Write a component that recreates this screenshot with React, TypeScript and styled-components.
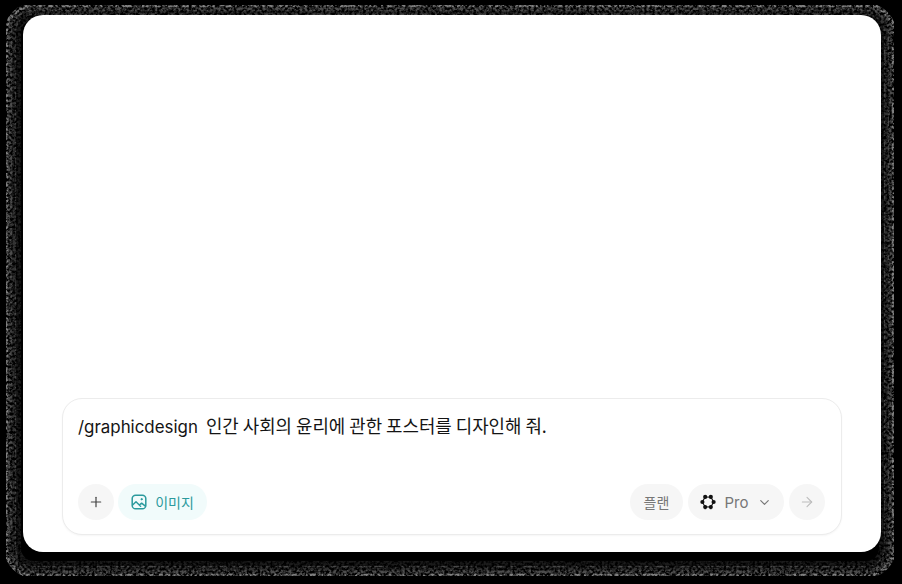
import React from 'react';
import styled, { createGlobalStyle } from 'styled-components';
import { ArrowRight, ChevronDown, Plus } from 'lucide-react';

const GlobalStyle = createGlobalStyle`
  html, body {
    margin: 0;
    padding: 0;
    background: #000;
    font-family: Inter, "Noto Sans CJK KR", sans-serif;
  }
`;

// grain bands, from the outer edge in to the card
const bands = [
  { inset: 6, width: 4, opacity: 0.5 },
  { inset: 10, width: 4, opacity: 0.3 },
  { inset: 14, width: 4, opacity: 0.2 },
  { inset: 18, width: 6, opacity: 0.11 },
];

const NoiseRing = () => (
  <RingSvg width="902" height="584" viewBox="0 0 902 584">
    <defs>
      <filter id="grain" x="0" y="0" width="100%" height="100%" filterUnits="objectBoundingBox">
        <feTurbulence type="fractalNoise" baseFrequency="0.38" numOctaves="2" seed="11" />
        <feColorMatrix
          type="matrix"
          values="0 0 0 0 1  0 0 0 0 1  0 0 0 0 1  3 0 0 0 -1"
        />
        <feComposite in2="SourceGraphic" operator="in" />
        <feGaussianBlur stdDeviation="0.5" />
      </filter>
    </defs>
    <g filter="url(#grain)" fill="none" stroke="#fff">
      {bands.map(b => (
        <rect
          key={b.inset}
          x={4 + b.inset - 4}
          y={4 + b.inset - 4 - 1}
          width={893 - 2 * (b.inset - 4) - 1}
          height={574 - 2 * (b.inset - 4) + 1}
          rx={Math.max(34 - b.inset, 14)}
          strokeWidth={b.width}
          strokeOpacity={b.opacity}
        />
      ))}
    </g>
  </RingSvg>
);

const ImageIcon = () => (
  <svg width="16" height="16" viewBox="0 0 16 16" fill="none" stroke="#2b9a9d" strokeWidth="1.5" strokeLinecap="round" strokeLinejoin="round">
    <rect x="1.2" y="1.2" width="13.6" height="13.6" rx="3.4" />
    <path d="M1.6 11 L5 7.8 L9.6 12.2 M8.4 11 L10.6 9.2 L14.4 12.2" />
    <circle cx="10.6" cy="5.2" r="0.7" fill="#2b9a9d" strokeWidth="0.8" />
  </svg>
);

const FlowerIcon = () => (
  <svg width="16" height="16" viewBox="0 0 16 16" fill="#111">
    <circle cx="8" cy="8" r="5" fill="none" stroke="#111" strokeWidth="1.1" />
    <circle cx="5.2" cy="2.9" r="2.1" />
    <circle cx="10.8" cy="2.9" r="2.1" />
    <circle cx="2.4" cy="8" r="2.1" />
    <circle cx="13.6" cy="8" r="2.1" />
    <circle cx="5.2" cy="13.1" r="2.1" />
    <circle cx="10.8" cy="13.1" r="2.1" />
  </svg>
);

export default function App() {
  return (
    <>
      <GlobalStyle />
      <Frame>
        <NoiseRing />
        <Card>
          <Composer>
            <Prompt>
              <span>/graphicdesign</span>
              <PromptBody>인간 사회의 윤리에 관한 포스터를 디자인해 줘.</PromptBody>
            </Prompt>
            <Toolbar>
              <ToolGroup>
                <RoundButton>
                  <Plus size={16} color="#444" strokeWidth={1.8} />
                </RoundButton>
                <ImagePill>
                  <ImageIcon />
                  이미지
                </ImagePill>
              </ToolGroup>
              <ToolGroup>
                <GrayPill>플랜</GrayPill>
                <ModelPill>
                  <FlowerIcon />
                  <span>Pro</span>
                  <ChevronDown size={15} color="#777" strokeWidth={1.8} />
                </ModelPill>
                <RoundButton>
                  <ArrowRight size={16} color="#bcbcbc" strokeWidth={1.6} />
                </RoundButton>
              </ToolGroup>
            </Toolbar>
          </Composer>
        </Card>
      </Frame>
    </>
  );
}

const Frame = styled.div`
  position: relative;
  box-sizing: border-box;
  width: 902px;
  height: 584px;
  padding: 15px 21px 32px 23px;
  background: #000;
  overflow: hidden;
`;

const RingSvg = styled.svg`
  position: absolute;
  top: 0;
  left: 0;
`;

const Card = styled.div`
  position: relative;
  box-sizing: border-box;
  height: 100%;
  padding: 0 39px 17px;
  display: flex;
  flex-direction: column;
  justify-content: flex-end;
  background: #fff;
  border-radius: 20px;
`;

const Composer = styled.div`
  box-sizing: border-box;
  height: 137px;
  padding: 14px 16px 14px 15px;
  display: flex;
  flex-direction: column;
  justify-content: space-between;
  background: #fff;
  border: 1px solid #ececec;
  border-radius: 20px;
  box-shadow: 0 1px 2px rgba(0, 0, 0, 0.04);
`;

const Prompt = styled.div`
  display: flex;
  align-items: baseline;
  gap: 8px;
  font-size: 16.9px;
  line-height: 24px;
  color: #141414;
`;

const PromptBody = styled.span`
  font-family: "Noto Sans CJK KR", sans-serif;
  font-size: 17.85px;
`;

const Toolbar = styled.div`
  display: flex;
  justify-content: space-between;
  align-items: center;
`;

const ToolGroup = styled.div`
  display: flex;
  align-items: center;
  gap: 5px;
`;

const RoundButton = styled.div`
  width: 36px;
  height: 36px;
  display: flex;
  align-items: center;
  justify-content: center;
  background: #f6f6f6;
  border-radius: 50%;
`;

const Pill = styled.div`
  box-sizing: border-box;
  height: 36px;
  display: flex;
  align-items: center;
  border-radius: 18px;
  font-size: 14px;
`;

const ImagePill = styled(Pill)`
  width: 89px;
  justify-content: center;
  gap: 8px;
  margin-left: -1px;
  background: #f1fbfb;
  color: #2b9a9d;
  font-family: "Noto Sans CJK KR", sans-serif;
`;

const GrayPill = styled(Pill)`
  width: 53px;
  justify-content: center;
  background: #f6f6f6;
  color: #777;
  font-family: "Noto Sans CJK KR", sans-serif;
`;

const ModelPill = styled(Pill)`
  width: 96px;
  padding: 0 12px;
  justify-content: space-between;
  background: #f6f6f6;
  color: #777;
  font-size: 15px;
`;
